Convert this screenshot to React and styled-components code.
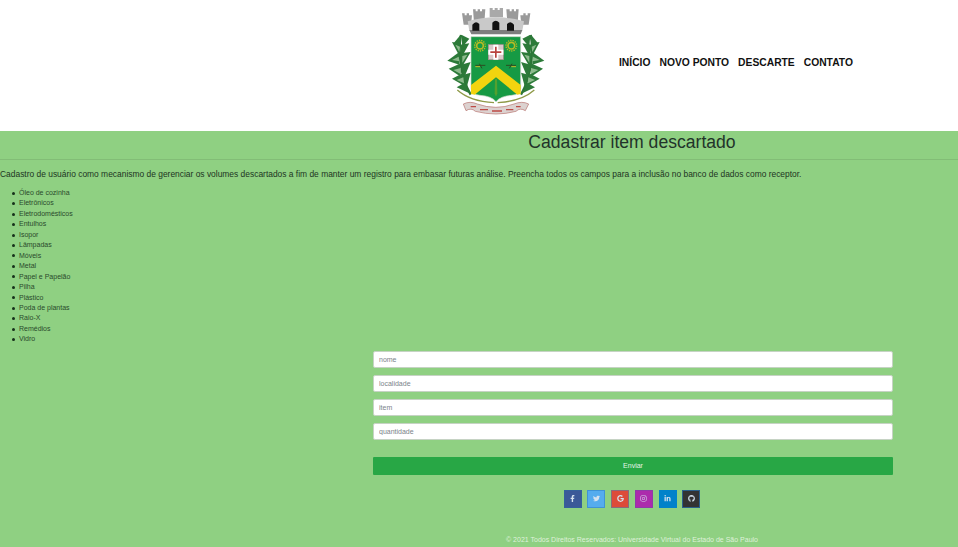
import styled, { createGlobalStyle } from "styled-components";
import { FaFacebookF, FaTwitter, FaGoogle, FaInstagram, FaLinkedinIn, FaGithub } from "react-icons/fa";

const GlobalStyle = createGlobalStyle`
  html, body {
    margin: 0;
    padding: 0;
  }
  body {
    background: #8fd082;
    font-family: "Liberation Sans", Arial, sans-serif;
    color: #212529;
  }
`;

const Header = styled.header`
  box-sizing: border-box;
  height: 131px;
  background: #fff;
  display: flex;
  align-items: flex-start;
  padding-left: 430px;
`;

const Logo = styled.svg`
  width: 130px;
  height: 125px;
  flex: none;
  filter: blur(0.35px);
`;

const Nav = styled.nav`
  display: flex;
  gap: 9px;
  margin: 56px 0 0 59px;
  font-size: 10.3px;
  line-height: 14px;
  font-weight: 700;
  color: #111;
`;

const Page = styled.main`
  height: 416px;
  overflow: hidden;
`;

const Title = styled.h1`
  box-sizing: border-box;
  margin: 0;
  padding: 1px 0 0 306px;
  height: 29px;
  font-size: 17.6px;
  line-height: 21px;
  font-weight: 400;
  text-align: center;
  border-bottom: 1px solid #82bd76;
  color: #22332a;
`;

const Intro = styled.p`
  margin: 9px 0 0;
  font-size: 8.43px;
  line-height: 11px;
  color: #20351f;
`;

const Materials = styled.ul`
  margin: 8px 0 0;
  padding: 0 0 0 12px;
  list-style: none;
  font-size: 7px;
  line-height: 10.45px;
  color: #2a4a2c;
`;

const Material = styled.li`
  display: flex;
  align-items: center;
  gap: 4px;

  &::before {
    content: "";
    width: 3px;
    height: 3px;
    border-radius: 50%;
    background: #16301a;
  }
`;

const FormArea = styled.form`
  width: 520px;
  margin: 6px 0 0 373px;
  display: flex;
  flex-direction: column;
`;

const Field = styled.input`
  box-sizing: border-box;
  height: 17px;
  margin-bottom: 7px;
  padding: 0 5px;
  border: 1px solid #c6d3c4;
  border-radius: 2px;
  background: #fff;
  font-family: inherit;
  font-size: 7px;
  outline: none;

  &::placeholder {
    color: #7b838a;
    opacity: 1;
  }
`;

const Submit = styled.button`
  height: 18px;
  margin-top: 10px;
  border: 0;
  border-radius: 1px;
  background: #28a745;
  color: #e6f5e6;
  font-family: inherit;
  font-size: 7px;
`;

const Socials = styled.div`
  display: flex;
  justify-content: center;
  gap: 5.7px;
  width: 518px;
  margin: 15px 0 0 373px;
`;

const Social = styled.a`
  width: 18px;
  height: 18px;
  display: flex;
  align-items: center;
  justify-content: center;
  box-sizing: border-box;
  border: 1px solid ${(p) => p.$edge};
  background: ${(p) => p.$bg};
  color: #d5e2ee;
  font-size: 7px;
`;

const Footer = styled.footer`
  margin: 27px 0 0 306px;
  text-align: center;
  font-size: 7px;
  line-height: 10px;
  color: #dff0da;
`;

const materials = [
  "Óleo de cozinha",
  "Eletrônicos",
  "Eletrodomésticos",
  "Entulhos",
  "Isopor",
  "Lâmpadas",
  "Móveis",
  "Metal",
  "Papel e Papelão",
  "Pilha",
  "Plástico",
  "Poda de plantas",
  "Raio-X",
  "Remédios",
  "Vidro",
];

const socials = [
  { icon: FaFacebookF, bg: "#3b5998", edge: "#34609c" },
  { icon: FaTwitter, bg: "#55acee", edge: "#3f93d6" },
  { icon: FaGoogle, bg: "#dd4b39", edge: "#8b6a7a" },
  { icon: FaInstagram, bg: "#ac2bac", edge: "#8f3aa8" },
  { icon: FaLinkedinIn, bg: "#0082ca", edge: "#0082ca" },
  { icon: FaGithub, bg: "#333333", edge: "#2a5f8a" },
];

// one half of the cane sprays, mirrored for the right side
const Cane = () => (
  <>
    <path d="M93 105 C84 150 90 230 122 284" fill="none" stroke="#2c7436" strokeWidth="7" />
    <g fill="#2c7a39">
      <path d="M92 104 L72 128 L92 140Z" />
      <path d="M94 104 L118 116 L97 142Z" />
      <path d="M90 130 L66 126 L86 164Z" />
      <path d="M90 134 L118 130 L95 172Z" />
      <path d="M88 156 L52 182 L88 194Z" />
      <path d="M90 160 L122 156 L94 204Z" />
      <path d="M92 190 L56 206 L92 230Z" />
      <path d="M93 194 L122 186 L102 234Z" />
      <path d="M98 220 L66 236 L104 258Z" />
      <path d="M100 224 L122 218 L110 262Z" />
      <path d="M104 248 L80 262 L118 280Z" />
    </g>
    <g fill="#8dbb8d">
      <path d="M86 170 L66 180 L88 184Z" />
      <path d="M97 168 L112 164 L97 188Z" />
      <path d="M92 204 L70 210 L92 222Z" />
      <path d="M90 140 L76 134 L88 156Z" />
      <path d="M100 232 L80 240 L102 250Z" />
    </g>
    <path d="M82 270 Q120 304 192 308" fill="none" stroke="#8f9a48" strokeWidth="4" />
  </>
);

const Crest = () => (
  <Logo viewBox="0 0 390 375">
    <Cane />
    <g transform="matrix(-1 0 0 1 395 0)">
      <Cane />
    </g>

    {/* wall crown */}
    <g fill="#9a9a9a">
      <path d="M96 40 h8 v6 h6 v-6 h7 v6 h9 l-3 28 h-22Z" />
      <path d="M301 40 h-8 v6 h-6 v-6 h-7 v6 h-9 l3 28 h22Z" />
      <path d="M129 28 h8 v6 h6 v-6 h7 v6 h6 v-6 h10 l-3 40 h-31Z" />
      <path d="M266 28 h-8 v6 h-6 v-6 h-7 v6 h-6 v-6 h-10 l3 40 h31Z" />
    </g>
    <path d="M179 24 h9 v6 h6 v-6 h9 v6 h6 v-6 h10 v28 h-40Z" fill="#a9a9a9" />
    <path d="M113 64 Q198 40 282 64 L277 92 H118Z" fill="#c9c9c9" />
    <path d="M118 90 H277 L272 103 H124Z" fill="#7e7e7e" />
    <g fill="#121212">
      <path d="M127 92 V74 Q137 60 148 72 V92Z" />
      <path d="M187 90 V68 Q197 56 208 68 V90Z" />
      <path d="M231 72 Q242 60 252 74 V92 H231Z" />
    </g>

    {/* shield */}
    <path d="M123 110 H272 V265 Q272 284 245 286 Q212 288 198 305 Q184 288 150 286 Q123 284 123 265Z" fill="#169a44" stroke="#c9d6c4" strokeWidth="2" />
    <path d="M198 197 L272 255 V282 L262 284 L198 232 L134 284 L123 282 V255Z" fill="#f2d40f" />
    <path d="M195 236 h6 l1 44 -4 10 -4-10Z" fill="#54a02f" />

    {/* suns */}
    <g fill="none" stroke="#b9ba24">
      <circle cx="150" cy="137" r="10" strokeWidth="5" />
      <circle cx="244" cy="137" r="10" strokeWidth="5" />
      <circle cx="150" cy="137" r="16" strokeWidth="4" strokeDasharray="4 3" />
      <circle cx="244" cy="137" r="16" strokeWidth="4" strokeDasharray="4 3" />
    </g>

    {/* centre arms */}
    <rect x="175" y="134" width="45" height="45" fill="#d9c9ca" stroke="#a98f90" strokeWidth="2" />
    <path d="M190 134 h15 v15 h15 v15 h-15 v15 h-15 v-15 h-15 v-15 h15Z" fill="#fff" />
    <path d="M195 140 h5 v14 h14 v5 h-14 v14 h-5 v-14 h-14 v-5 h14Z" fill="#b8423e" />

    {/* tools */}
    <g fill="none" strokeWidth="3">
      <path d="M136 196 h30 M148 191 l8 14 M228 196 h30 M246 191 l-8 14" stroke="#2d4c22" />
      <path d="M136 200 h14 M244 200 h14" stroke="#c4bb2b" />
    </g>

    {/* ribbon */}
    <path d="M100 312 Q120 302 142 312 Q198 332 252 312 Q276 302 296 312 L286 332 Q270 322 258 334 Q198 350 136 334 Q124 322 108 332Z" fill="#dcd2d0" stroke="#b5706b" strokeWidth="2" />
    <path d="M122 320 h16 M150 329 h24 M186 333 h30 M228 329 h22 M258 320 h14" stroke="#bd4a44" strokeWidth="4" fill="none" />
  </Logo>
);

const App = () => {
  return (
    <>
      <GlobalStyle />
      <Header>
        <Crest />
        <Nav>
          <span>INÍCIO</span>
          <span>NOVO PONTO</span>
          <span>DESCARTE</span>
          <span>CONTATO</span>
        </Nav>
      </Header>
      <Page>
        <Title>Cadastrar item descartado</Title>
        <Intro>
          Cadastro de usuário como mecanismo de gerenciar os volumes descartados a fim de manter um registro para
          embasar futuras análise. Preencha todos os campos para a inclusão no banco de dados como receptor.
        </Intro>
        <Materials>
          {materials.map((item) => (
            <Material key={item}>{item}</Material>
          ))}
        </Materials>
        <FormArea>
          <Field placeholder="nome" />
          <Field placeholder="localidade" />
          <Field placeholder="item" />
          <Field placeholder="quantidade" />
          <Submit type="button">Enviar</Submit>
        </FormArea>
        <Socials>
          {socials.map(({ icon: Icon, bg, edge }) => (
            <Social key={bg} $bg={bg} $edge={edge}>
              <Icon />
            </Social>
          ))}
        </Socials>
        <Footer>© 2021 Todos Direitos Reservados: Universidade Virtual do Estado de São Paulo</Footer>
      </Page>
    </>
  );
};

export default App;
